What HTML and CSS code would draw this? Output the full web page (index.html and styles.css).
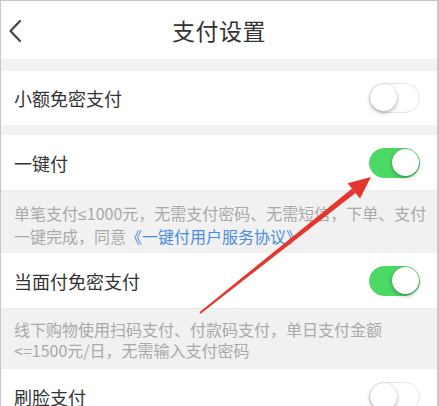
FILE: index.html
```html
<!DOCTYPE html>
<html lang="zh">
<head>
<meta charset="utf-8">
<title>支付设置</title>
<link rel="stylesheet" href="styles.css">
</head>
<body>
<div class="screen">
  <header class="header">
    <div class="back">
      <svg width="14" height="24" viewBox="0 0 14 24"><path d="M12 2 L2.5 12 L12 22" fill="none" stroke="#444" stroke-width="2.2" stroke-linecap="round" stroke-linejoin="round"/></svg>
    </div>
    <h1 class="title">支付设置</h1>
    <div></div>
  </header>
  <div class="gap gap-top"></div>
  <div class="row row-short">
    <span class="label">小额免密支付</span>
    <span class="switch"><span class="knob"></span></span>
  </div>
  <div class="gap gap-mid"></div>
  <div class="row">
    <span class="label">一键付</span>
    <span class="switch on"><span class="knob"></span></span>
  </div>
  <div class="desc desc-a">单笔支付<span class="narrow">≤</span>1000元，无需支付密码、无需短信，下单、支付一键完成，同意<span class="link">《一键付用户服务协议》</span></div>
  <div class="row">
    <span class="label">当面付免密支付</span>
    <span class="switch on"><span class="knob"></span></span>
  </div>
  <div class="desc desc-b">线下购物使用扫码支付、付款码支付，单日支付金额&lt;=1500元/日，无需输入支付密码</div>
  <div class="row">
    <span class="label">刷脸支付</span>
    <span class="switch"><span class="knob"></span></span>
  </div>
  <svg class="arrow" width="439" height="406" viewBox="0 0 439 406">
    <polygon points="200.6,313.8 355.5,192.9 352.1,188.6 199.4,312.2" fill="#e5352f"/>
    <polygon points="371,177 347.6,183.2 360,198.6" fill="#e5352f"/>
  </svg>
</div>
</body>
</html>
```
FILE: styles.css
```css
* { box-sizing: border-box; }
html, body { margin: 0; padding: 0; background: #fff; }
.screen {
  position: relative;
  width: 439px;
  height: 406px;
  overflow: hidden;
  border-top: 1px solid #c6c6c6;
  border-left: 1px solid #c6c6c6;
  border-right: 2px solid #c6c6c6;
  background: #f2f2f2;
  font-family: "Noto Sans CJK SC", "Noto Sans", sans-serif;
}
.header {
  height: 58px;
  background: #fff;
  display: grid;
  grid-template-columns: 40px 1fr 40px;
  align-items: center;
}
.back { padding-left: 7px; padding-top: 2px; display: flex; align-items: center; }
.title {
  margin: 0;
  text-align: center;
  font-size: 23px;
  font-weight: 400;
  color: #333;
  letter-spacing: 0.5px;
}
.gap { background: #f2f2f2; }
.gap-top { height: 12px; }
.gap-mid { height: 10px; }
.row {
  height: 56px;
  background: #fff;
  display: flex;
  align-items: center;
  justify-content: space-between;
  padding: 0 17px 0 13px;
  border-bottom: 1px solid #ececec;
}
.row-short { height: 54px; border-bottom: none; }
.label { font-size: 18px; color: #333; }
.switch {
  position: relative;
  width: 51px;
  height: 30px;
  border-radius: 15px;
  background: #fff;
  border: 1.5px solid #e4e4e4;
}
.switch .knob {
  position: absolute;
  top: 0;
  left: 0;
  width: 27px;
  height: 27px;
  border-radius: 50%;
  background: #fff;
  box-shadow: 0 2px 4px rgba(0,0,0,0.28), 0 0 1px rgba(0,0,0,0.2);
}
.switch.on { background: #4cd864; border-color: #4cd864; }
.switch.on .knob { left: auto; right: 0; }
.desc {
  background: #f1f1f1;
  color: #a9a9a9;
  font-size: 16px;
  line-height: 20.5px;
  padding: 0 10px 0 13px;
}
.narrow { font-family: "Liberation Sans", sans-serif; }
.desc-a { height: 62px; padding-top: 12px; }
.desc-b { height: 60px; padding-top: 10px; }
.link { color: #4a8ce0; }
.arrow { position: absolute; left: -1px; top: -1px; pointer-events: none; }
```
